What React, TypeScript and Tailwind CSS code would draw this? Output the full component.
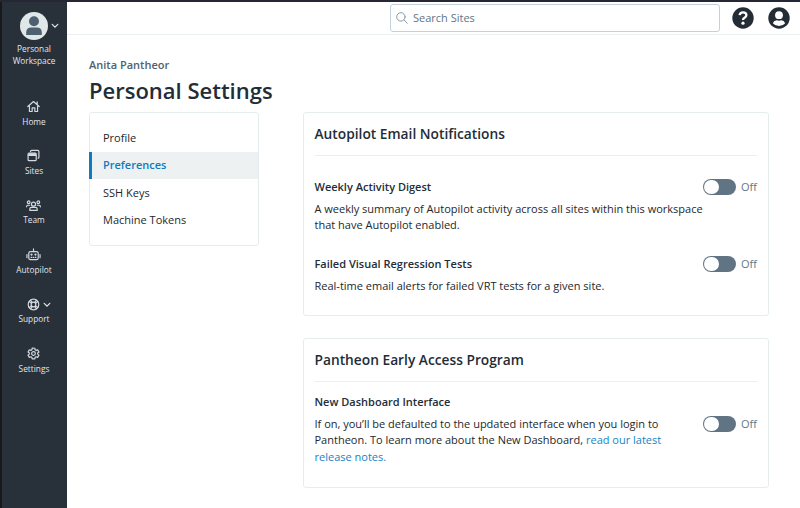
import React from "react";

const iconProps = {
  viewBox: "0 0 24 24",
  fill: "none",
  stroke: "currentColor",
  strokeWidth: 2.2,
  strokeLinecap: "round" as const,
  strokeLinejoin: "round" as const,
};

const HomeIcon = () => (
  <svg {...iconProps} className="h-[13px] w-[13px]">
    <path d="M1.500 12 12 2.800 22.500 12M18.800 3.500v5M4.500 10.500V21.200h5v-6.700h5v6.700h5V10.500" />
  </svg>
);

const SitesIcon = () => (
  <svg {...iconProps} className="h-[13px] w-[13px]">
    <rect x="2" y="7.500" width="15" height="14" rx="1.800" />
    <path d="M2.500 8h14v4.500h-14z" fill="currentColor" stroke="none" />
    <path d="M2.500 12h14" />
    <path d="M6.500 4.500Q6.500 2.500 8.500 2.500H20Q22 2.500 22 4.500V15Q22 17 20.500 17" />
  </svg>
);

const TeamIcon = () => (
  <svg {...iconProps} viewBox="0 0 28 24" className="h-[13px] w-[15px]">
    <circle cx="14" cy="9.500" r="3.800" />
    <circle cx="5" cy="6" r="2.500" />
    <circle cx="23" cy="6" r="2.500" />
    <path d="M7 21v-2.200Q7 15.500 10.500 15.500h7Q21 15.500 21 18.800V21zM1.200 14.500v-1Q1.200 11.500 3.500 11.500H7M26.800 14.500v-1Q26.800 11.500 24.500 11.500H21" />
  </svg>
);

const RobotIcon = () => (
  <svg {...iconProps} viewBox="0 0 28 24" className="h-[13px] w-[15px]">
    <path d="M14 1.500v5M1.800 12v6M26.200 12v6" />
    <rect x="5.200" y="6.500" width="17.600" height="15" rx="3" />
    <circle cx="10.300" cy="12.200" r="1" fill="currentColor" />
    <circle cx="17.700" cy="12.200" r="1" fill="currentColor" />
    <path d="M9.500 17.500h1M13.500 17.500h1M17.500 17.500h1" />
  </svg>
);

const SupportIcon = () => (
  <svg {...iconProps} className="h-[13px] w-[13px]">
    <circle cx="12" cy="12" r="9.800" />
    <circle cx="12" cy="12" r="4.300" />
    <path d="m4 6.500 4 3M6.500 4l3 4M20 6.500l-4 3M17.500 4l-3 4M4 17.500l4-3M6.500 20l3-4M20 17.500l-4-3M17.500 20l-3-4" />
  </svg>
);

const SettingsIcon = () => (
  <svg {...iconProps} className="h-[13px] w-[13px]">
    <path d="m9.500 2.200-.5 3-1.800 1-2.800-1.100-2.500 4.300L4.300 11.200v1.900L1.900 15l2.500 4.200 2.800-1.100 1.800 1 .5 2.900h5l.5-2.900 1.800-1 2.800 1.100 2.500-4.200-2.400-1.900v-1.900l2.400-1.800-2.500-4.300-2.800 1.100-1.800-1-.5-2.900z" />
    <circle cx="12" cy="12" r="3.400" />
  </svg>
);

const Chevron = () => (
  <svg viewBox="0 0 8 6" fill="none" stroke="currentColor" strokeWidth="1.200" strokeLinecap="round" className="h-[6px] w-[8px]">
    <path d="m1.200 1.300 2.800 2.900 2.800-2.900" />
  </svg>
);

const navItems = [
  { label: "Home", icon: <HomeIcon /> },
  { label: "Sites", icon: <SitesIcon /> },
  { label: "Team", icon: <TeamIcon /> },
  { label: "Autopilot", icon: <RobotIcon /> },
  { label: "Support", icon: <SupportIcon />, menu: true },
  { label: "Settings", icon: <SettingsIcon /> },
];

function Sidebar() {
  return (
    <nav className="flex w-[67px] shrink-0 flex-col border-l-2 border-[#17191c] bg-[#283039] text-[8.300px] text-[#e2e6ea]">
      <button className="relative flex flex-col items-center pt-[10px] pr-[1px] leading-[12px]">
        <svg viewBox="0 0 28 28" className="mb-[2.500px] h-[28px] w-[28px]">
          <circle cx="14" cy="14" r="14" fill="#dfe7e9" />
          <circle cx="14" cy="9.200" r="5" fill="#4f6171" />
          <path d="M6.200 23v-2.500q0-5 5-5h5.600q5 0 5 5V23z" fill="#4f6171" />
        </svg>
        <span className="absolute top-[21px] left-[49px] flex"><Chevron /></span>
        <span>Personal<br />Workspace</span>
      </button>
      <ul className="mt-[33.500px] flex flex-col">
        {navItems.map((item) => (
          <li key={item.label} className="relative flex h-[49.450px] flex-col items-center pr-[1px]">
            <span className="mr-[1px] flex text-[#d3d9de]">{item.icon}</span>
            <span className="mt-[2.500px] leading-[12px]">{item.label}</span>
            {item.menu && <span className="absolute top-[4px] left-[41px] flex"><Chevron /></span>}
          </li>
        ))}
      </ul>
    </nav>
  );
}

function Header() {
  return (
    <header className="flex h-[33px] shrink-0 items-center justify-end border-b border-[#eaf0f0] pr-[10px]">
      <label className="flex h-[28px] w-[330px] items-center rounded-[3px] border border-[#c5d0da] pl-[5px]">
        <svg viewBox="0 0 12 12" fill="none" stroke="#7d8f9d" strokeWidth="0.900" strokeLinecap="round" className="h-[12px] w-[12px]">
          <circle cx="4.900" cy="4.900" r="4.200" />
          <path d="m8 8 3.300 3.300" />
        </svg>
        <input placeholder="Search Sites" className="ml-[5px] w-[200px] bg-transparent outline-none placeholder:text-[#5f7585]" />
      </label>
      <svg viewBox="0 0 22 22" className="ml-[12px] h-[22px] w-[22px]">
        <circle cx="11" cy="11" r="10.700" fill="#242d36" />
        <path d="M7.600 8.200Q8 5.300 11 5.300q3.400 0 3.400 2.700 0 1.500-1.600 2.500-1.800 1-1.800 2.400" fill="none" stroke="#fff" strokeWidth="2.300" />
        <circle cx="11" cy="16.200" r="1.600" fill="#fff" />
      </svg>
      <svg viewBox="0 0 22 22" className="ml-[14px] h-[22px] w-[22px]">
        <circle cx="11" cy="11" r="10.700" fill="#242d36" />
        <circle cx="11" cy="8.200" r="3.900" fill="#fff" />
        <path d="M4.800 16.200q1.200-2.900 4-2.900 2.200.8 4.400 0 2.800 0 4 2.900Q14.800 19 11 19t-6.200-2.800z" fill="#fff" />
      </svg>
    </header>
  );
}

function Toggle() {
  return (
    <button role="switch" aria-checked="false" className="flex h-[17px] items-center gap-[5px] text-[#647786]">
      <span className="flex h-[16.500px] w-[33px] items-center rounded-full bg-[#607483] pl-[1px]">
        <span className="h-[14.500px] w-[14.500px] rounded-full bg-white" />
      </span>
      Off
    </button>
  );
}

const tabs = ["Profile", "Preferences", "SSH Keys", "Machine Tokens"];

export default function App() {
  return (
    <div className="flex h-[508px] w-[800px] flex-col overflow-hidden bg-white font-['Open_Sans','Noto_Sans',sans-serif] text-[11px] leading-[16.500px] text-[#23282d]">
      <div className="h-[2px] shrink-0 bg-[#252735]" />
      <div className="flex min-h-0 flex-1">
        <Sidebar />
        <div className="flex flex-1 flex-col">
          <Header />
          <main className="pt-[22px] pr-[31px] pl-[22px]">
            <p className="font-semibold text-[#4f6171]">Anita Pantheor</p>
            <h1 className="text-[22px] leading-[33px] font-semibold text-[#232d37]">Personal Settings</h1>
            <div className="mt-[5.500px] flex items-start justify-between">
              <ul className="h-[134px] w-[170px] rounded-[3px] border border-[#e6edee] pt-[11px]">
                {tabs.map((tab) => (
                  <li
                    key={tab}
                    className={
                      tab === "Preferences"
                        ? "-ml-px flex h-[27.500px] items-center border-l-[3px] border-[#0f7bbf] bg-[#edf1f2] pl-[11px] font-semibold text-[#0f7bbf]"
                        : "flex h-[27.500px] items-center pl-[13px]"
                    }
                  >
                    {tab}
                  </li>
                ))}
              </ul>
              <div className="flex w-[466px] flex-col gap-[22px]">
                <section className="h-[204px] rounded-[3px] border border-[#e6edee] pr-[11px] pl-[10.500px]">
                  <h2 className="flex h-[43px] items-center border-b border-[#eaf0f0] pt-[1px] text-[13.750px] font-semibold text-[#232d37]">Autopilot Email Notifications</h2>
                  <div className="flex justify-between pt-[22.500px]">
                    <div className="w-[388px]">
                      <h3 className="font-semibold text-[#232d37]">Weekly Activity Digest</h3>
                      <p className="mt-[5.500px] whitespace-nowrap">A weekly summary of Autopilot activity across all sites within this workspace<br />that have Autopilot enabled.</p>
                    </div>
                    <Toggle />
                  </div>
                  <div className="flex justify-between pt-[22px]">
                    <div>
                      <h3 className="font-semibold text-[#232d37]">Failed Visual Regression Tests</h3>
                      <p className="mt-[5.500px]">Real-time email alerts for failed VRT tests for a given site.</p>
                    </div>
                    <Toggle />
                  </div>
                </section>
                <section className="h-[150px] rounded-[3px] border border-[#e6edee] pr-[11px] pl-[10.500px]">
                  <h2 className="flex h-[43px] items-center border-b border-[#eaf0f0] pt-[1px] text-[13.750px] font-semibold text-[#232d37]">Pantheon Early Access Program</h2>
                  <h3 className="pt-[11.500px] font-semibold text-[#232d37]">New Dashboard Interface</h3>
                  <div className="flex justify-between pt-[5.500px]">
                    <p className="w-[365px]">
                      If on, you’ll be defaulted to the updated interface when you login to<br />
                      Pantheon. To learn more about the New Dashboard, <a href="#" className="text-[#1484c8]">read our latest<br />release notes.</a>
                    </p>
                    <Toggle />
                  </div>
                </section>
              </div>
            </div>
          </main>
        </div>
      </div>
    </div>
  );
}
